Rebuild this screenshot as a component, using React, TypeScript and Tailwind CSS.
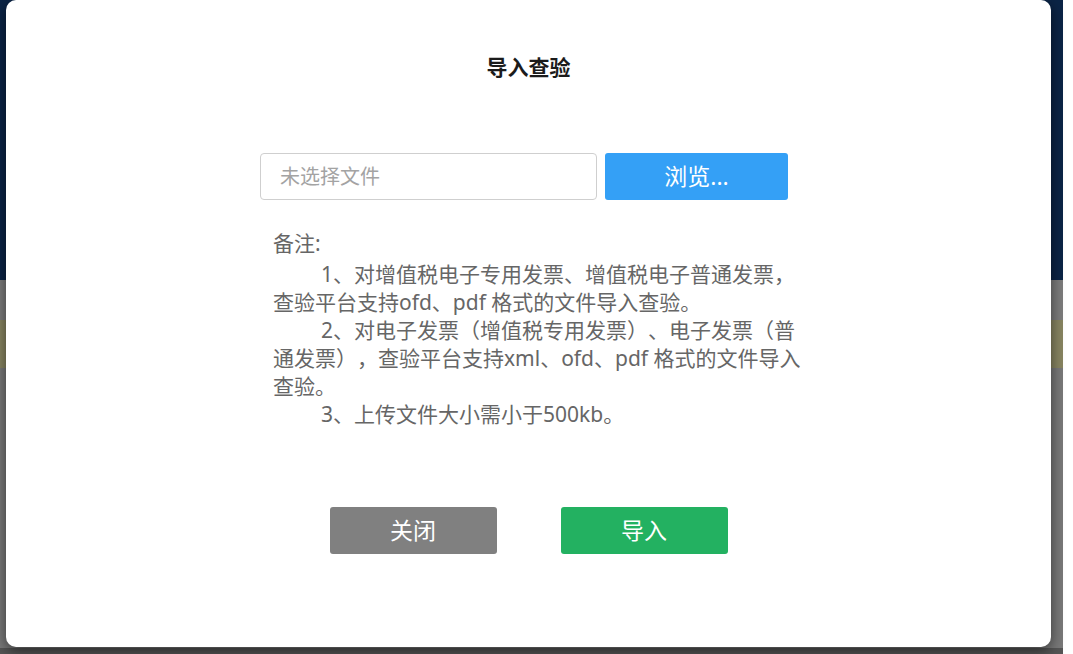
import React from "react";

const font = {
  fontFamily: '"Noto Sans", "Noto Sans CJK SC", sans-serif',
};

export default function App() {
  return (
    <div className="relative w-[1073px] h-[654px] overflow-hidden bg-white" style={font}>
      {/* page behind the dialog, dimmed */}
      <div className="flex flex-col w-[1063px] h-[654px]">
        <div className="h-[280px] bg-[#0b2446]" />
        <div className="h-[40px] bg-[#7c7c7c]" />
        <div className="h-[48px] bg-[#888561]" />
        <div className="flex-1 bg-[#797979]" />
        <div className="h-[6px] bg-[#555555]" />
      </div>

      {/* dialog */}
      <div className="absolute left-[6px] top-0 w-[1045px] h-[647px] rounded-[10px] bg-white shadow-[0_4px_14px_rgba(0,0,0,0.55)] flex flex-col [text-spacing-trim:space-all]">
        <h2 className="pt-[54px] text-center text-[21px] leading-[26px] font-bold text-[#1b1b1b]">
          导入查验
        </h2>

        <div className="mt-[73px] ml-[254px] flex gap-[8px]">
          <input
            readOnly
            placeholder="未选择文件"
            className="w-[337px] h-[47px] rounded-[4px] border border-[#cfcfcf] px-[19px] text-[20px] text-[#555] placeholder:text-[#a3a3a3] outline-none"
          />
          <button className="w-[183px] h-[47px] rounded-[3px] bg-[#34a0f6] text-[23px] text-white">
            浏览...
          </button>
        </div>

        <div className="mt-[29px] ml-[267px] w-[535px] text-[21px] leading-[28px] text-[#666]">
          <p>备注:</p>
          <p className="mt-[3px] indent-[48px]">
            1、对增值税电子专用发票、增值税电子普通发票，查验平台支持ofd、pdf 格式的文件导入查验。
          </p>
          <p className="indent-[48px]">
            2、对电子发票（增值税专用发票）、电子发票（普通发票），查验平台支持xml、ofd、pdf 格式的文件导入查验。
          </p>
          <p className="indent-[48px]">3、上传文件大小需小于500kb。</p>
        </div>

        <div className="mt-[79px] flex justify-center gap-[64px]">
          <button className="w-[167px] h-[47px] rounded-[3px] bg-[#808080] text-[23px] text-white">
            关闭
          </button>
          <button className="w-[167px] h-[47px] rounded-[3px] bg-[#23b161] text-[23px] text-white">
            导入
          </button>
        </div>
      </div>
    </div>
  );
}
